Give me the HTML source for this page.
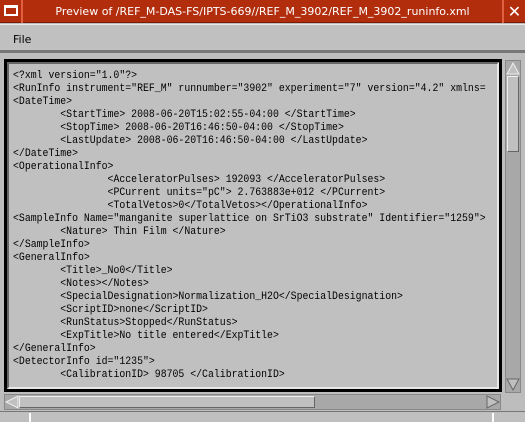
<!DOCTYPE html>
<html><head><style>
*{margin:0;padding:0;box-sizing:border-box}
body{width:525px;height:421px;background:#bdbdbd;position:relative;overflow:hidden;font-family:"DejaVu Sans","Liberation Sans",sans-serif}
.title{position:absolute;left:0;top:0;width:525px;height:23px;background:#b12d0c;border-bottom:1px solid #7a1c05}
.ticon{position:absolute;left:0;top:0;width:23px;height:23px;border-right:2px solid #e06040;}
.ticon div{position:absolute;left:4px;top:5px;width:14px;height:11px;border:2px solid #fff;border-top-width:3px}
.ttext{position:absolute;left:26px;right:26px;top:5px;text-align:center;color:#fff;font-size:11px;white-space:nowrap}
.close{position:absolute;right:0;top:0;width:23px;height:23px;border-left:2px solid #e06040;color:#fff;font-size:16px;font-weight:bold;text-align:center;line-height:23px}
.menu{position:absolute;left:0;top:24px;width:525px;height:29px;background:#c0c0c0;border-top:1px solid #e8e8e8;border-bottom:3px solid #777}
.menu span{position:absolute;left:13px;top:8px;font-size:11px;color:#000}
.frame{position:absolute;left:4px;top:59px;width:498px;height:333px;border:3px solid #000;background:#c0c0c0}
.frame:before{content:"";position:absolute;left:0;top:0;right:0;bottom:0;border:2px solid #e8e8e8;border-top-color:#666;border-left-color:#666}
pre{position:absolute;left:6px;top:8px;font-family:"Liberation Mono",monospace;font-size:11px;line-height:13px;tab-size:8;-moz-tab-size:8;color:#000;white-space:pre;transform:scaleX(0.895);transform-origin:0 0}
.vs{position:absolute;left:505px;top:60px;width:16px;height:333px;background:#a8a8a8;border:1px solid #888}
.vthumb{position:absolute;left:1px;top:15px;width:12px;height:76px;background:#c0c0c0;border:1px solid #eee;border-right-color:#666;border-bottom-color:#666}
.hs{position:absolute;left:4px;top:394px;width:497px;height:16px;background:#a8a8a8;border:1px solid #888}
.hthumb{position:absolute;left:14px;top:1px;width:296px;height:12px;background:#c0c0c0;border:1px solid #eee;border-right-color:#666;border-bottom-color:#666}
.bot{position:absolute;left:0;top:411px;width:525px;height:10px;border-top:1px solid #777;background:#c0c0c0}
</style></head><body>
<div class="title"><div class="ticon"><div></div></div><div class="ttext">Preview of /REF_M-DAS-FS/IPTS-669//REF_M_3902/REF_M_3902_runinfo.xml</div><div class="close">✕</div></div>
<div class="menu"><span>File</span></div>
<div class="frame"><pre>&lt;?xml version="1.0"?&gt;
&lt;RunInfo instrument="REF_M" runnumber="3902" experiment="7" version="4.2" xmlns=
&lt;DateTime&gt;
	&lt;StartTime&gt; 2008-06-20T15:02:55-04:00 &lt;/StartTime&gt;
	&lt;StopTime&gt; 2008-06-20T16:46:50-04:00 &lt;/StopTime&gt;
	&lt;LastUpdate&gt; 2008-06-20T16:46:50-04:00 &lt;/LastUpdate&gt;
&lt;/DateTime&gt;
&lt;OperationalInfo&gt;
		&lt;AcceleratorPulses&gt; 192093 &lt;/AcceleratorPulses&gt;
		&lt;PCurrent units="pC"&gt; 2.763883e+012 &lt;/PCurrent&gt;
		&lt;TotalVetos&gt;0&lt;/TotalVetos&gt;&lt;/OperationalInfo&gt;
&lt;SampleInfo Name="manganite superlattice on SrTiO3 substrate" Identifier="1259"&gt;
	&lt;Nature&gt; Thin Film &lt;/Nature&gt;
&lt;/SampleInfo&gt;
&lt;GeneralInfo&gt;
	&lt;Title&gt;_No0&lt;/Title&gt;
	&lt;Notes&gt;&lt;/Notes&gt;
	&lt;SpecialDesignation&gt;Normalization_H2O&lt;/SpecialDesignation&gt;
	&lt;ScriptID&gt;none&lt;/ScriptID&gt;
	&lt;RunStatus&gt;Stopped&lt;/RunStatus&gt;
	&lt;ExpTitle&gt;No title entered&lt;/ExpTitle&gt;
&lt;/GeneralInfo&gt;
&lt;DetectorInfo id="1235"&gt;
	&lt;CalibrationID&gt; 98705 &lt;/CalibrationID&gt;</pre></div>
<div class="vs"><svg width="14" height="14" style="position:absolute;left:0;top:0"><polygon points="7,2 13,13 1,13" fill="#c0c0c0" stroke="#eee"/></svg><div class="vthumb"></div><svg width="14" height="14" style="position:absolute;left:0;bottom:0"><polygon points="1,1 13,1 7,12" fill="#c0c0c0" stroke="#666"/></svg></div>
<div class="hs"><svg width="14" height="14" style="position:absolute;left:0;top:0"><polygon points="1,7 13,1 13,13" fill="#c0c0c0" stroke="#eee"/></svg><div class="hthumb"></div><svg width="14" height="14" style="position:absolute;right:0;top:0"><polygon points="1,1 13,7 1,13" fill="#c0c0c0" stroke="#666"/></svg></div>
<div class="bot"><div style="position:absolute;left:29px;top:1px;width:2px;height:9px;background:#fff"></div><div style="position:absolute;left:492px;top:1px;width:2px;height:9px;background:#fff"></div></div>
</body></html>
